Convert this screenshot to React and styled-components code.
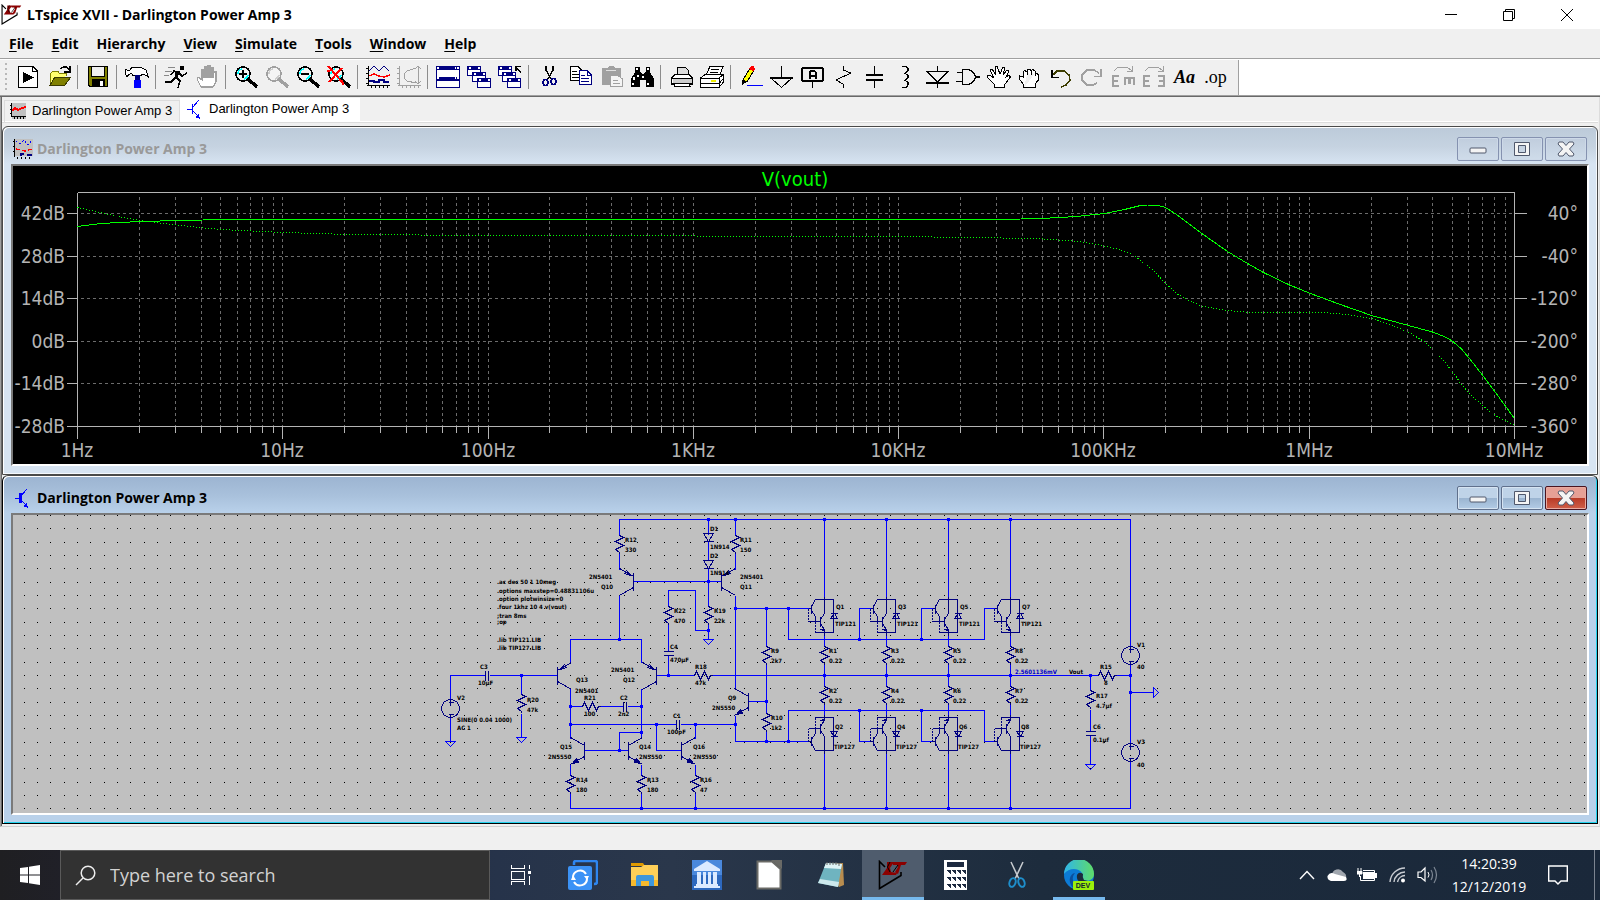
import React from "react";
import styled, { createGlobalStyle, css } from "styled-components";

const UI = `"Open Sans", "Noto Sans", sans-serif`;
const PLOT = `"DejaVu Sans Condensed", "DejaVu Sans", sans-serif`;

const GlobalStyle = createGlobalStyle`
  * { box-sizing: border-box; }
  body { margin: 0; background: #f0f0f0; font-family: ${UI}; color: #000; }
  button { font: inherit; color: inherit; background: none; border: 0; padding: 0; margin: 0; }
  svg { display: block; flex: none; }
`;

const Page = styled.div`
  display: flex;
  flex-direction: column;
  min-height: 100vh;
`;

/* ---------- application chrome ---------- */

const TitleBar = styled.header`
  display: flex;
  align-items: center;
  height: 29px;
  padding: 0 4px 0 1px;
  background: #fff;
`;

const AppTitle = styled.h1`
  flex: 1;
  margin: 0 0 0 5px;
  font-size: 14px;
  line-height: 20px;
  font-weight: 700;
`;

const CaptionButton = styled.button`
  display: flex;
  align-items: center;
  justify-content: center;
  width: 58px;
  height: 29px;
`;

const MenuBar = styled.nav`
  display: flex;
  height: 30px;
  border-bottom: 1px solid #a0a0a0;
`;

const MenuItem = styled.button`
  padding: 0 9px;
  font-size: 14px;
  line-height: 28px;
  font-weight: 700;
  u { text-underline-offset: 2px; }
`;

const ToolStrip = styled.div`
  display: flex;
  height: 38px;
  background: #fff;
  border-top: 1px solid #fff;
  border-bottom: 1px solid #696969;
  box-shadow: inset 0 -1px 0 #a0a0a0;
`;

const ToolBar = styled.div`
  display: flex;
  align-items: center;
  height: 35px;
  padding: 0 7px 2px 5px;
  background: #f0f0f0;
  border-right: 1px solid #a0a0a0;
`;

const Grip = styled.div`
  width: 2px;
  height: 28px;
  margin-right: 5px;
  background: repeating-linear-gradient(#b8b8b8 0 2px, transparent 2px 5px);
`;

const ToolButton = styled.button`
  display: flex;
  justify-content: center;
  align-items: center;
  width: 31px;
  height: 24px;
`;

const ToolSeparator = styled.div`
  width: 8px;
  height: 24px;
  background: linear-gradient(90deg, transparent 3px, #8c8c8c 3px 4px, transparent 4px);
`;

const Mdi = styled.main`
  border-left: 1px solid #a0a0a0;
  border-right: 1px solid #dcdcdc;
  border-bottom: 1px solid #d0d0d0;
  padding: 0 1px 2px;
  box-shadow: inset 1px 0 0 #696969;
`;

const TabStrip = styled.div`
  display: flex;
  align-items: flex-end;
  height: 29px;
  padding: 0 2px 4px;
  background: linear-gradient(#f0f0f0 24px, #fff 24px 25px, #dcdcdc 25px 26px, #f0f0f0 26px);
`;

const Tab = styled.button`
  display: flex;
  align-items: center;
  gap: 6px;
  height: 22px;
  width: 176px;
  padding: 0 0 2px 5px;
  border: 1px solid #dcdcdc;
  border-bottom: 0;
  font-family: "Liberation Sans", Arial, sans-serif;
  font-size: 13px;
  line-height: 18px;
  ${(p) => p.$active && css`
    height: 24px;
    width: 180px;
    gap: 8px;
    padding: 0 0 4px 6px;
    background: #fff;
    border-color: #fff;
  `}
`;

const Child = styled.section`
  display: flex;
  flex-direction: column;
  border: 1px solid ${(p) => (p.$active ? "#000" : "#4a4a4a")};
  border-top-color: #4a4a4a;
  border-radius: 6px 6px 0 0;
  background: ${(p) => (p.$active
    ? "linear-gradient(#9cb4d1, #a9c1dc 20px, #b9d1ea 37px, #b9d1ea)"
    : "linear-gradient(#bccad9, #c6d3e1 20px, #d7e4f2 37px, #d7e4f2)")};
  box-shadow: inset 1px 1px 0 #fff, inset -1px -1px 0 ${(p) => (p.$active ? "#22d3ee" : "#f4f8fc")};
  padding: 1px 8px 8px;
`;

const ChildTitle = styled.div`
  display: flex;
  align-items: center;
  gap: 4px;
  height: 36px;
  padding: 6px 2px 0;
  color: ${(p) => (p.$active ? "#000" : "#999")};
`;

const ChildName = styled.h2`
  flex: 1;
  margin: 0;
  font-size: 14px;
  line-height: 20px;
  font-weight: 700;
`;

const ChildButtons = styled.div`
  display: flex;
  gap: 2px;
`;

const ChildButton = styled.button`
  display: flex;
  align-items: center;
  justify-content: center;
  width: 42px;
  height: 24px;
  border: 1px solid #8592b0;
  border-radius: 2px;
  background: ${(p) => (p.$active ? "linear-gradient(#bfd3e8 0 50%, #9ab4d0 50%, #b3cce6)" : "linear-gradient(#c0cddd, #cfdcea)")};
  box-shadow: inset 0 0 0 1px ${(p) => (p.$active ? "#d6e4f2" : "#cdd9e8")};
  ${(p) => p.$active && css`border-color: #60708c;`}
  ${(p) => p.$danger && css`
    border-color: #4a1420;
    background: linear-gradient(#e6a096 0 50%, #b83a26 50%, #d0604a);
    box-shadow: inset 0 0 0 1px #e8aaa0;
  `}
`;

const Canvas = styled.div`
  border: 2px solid;
  border-color: #7a7a7a #fff #fff #7a7a7a;
  svg { width: 100%; height: auto; }
`;

const StatusBar = styled.footer`
  flex: 1;
  min-height: 22px;
  background: #f0f0f0;
`;

/* ---------- taskbar ---------- */

const TaskBar = styled.div`
  display: flex;
  height: 50px;
  background: linear-gradient(90deg, #1f1f22 0, #202028 4%, #26334a 31%, #2a374b 42%, #1d2c3d 65%, #1a283a 100%);
  color: #fff;
`;

const TaskButton = styled.button`
  display: flex;
  align-items: center;
  justify-content: center;
  width: ${(p) => p.$w || 62}px;
  height: 50px;
  ${(p) => p.$active && css`
    background: #4f5c6d;
    box-shadow: inset 0 -3px 0 #76b9ed;
  `}
  ${(p) => p.$running && css`
    background: linear-gradient(#76b9ed, #76b9ed) center bottom / 52px 3px no-repeat;
  `}
`;

const SearchBox = styled.label`
  display: flex;
  align-items: center;
  gap: 14px;
  width: 430px;
  padding-left: 14px;
  background: #323232;
  border: 1px solid #5a5a5a;
`;

const SearchInput = styled.input`
  flex: 1;
  min-width: 0;
  height: 40px;
  padding: 0;
  border: 0;
  outline: 0;
  background: none;
  color: #fff;
  font-family: ${UI};
  font-size: 18px;
  &::placeholder { color: #d2d2d2; opacity: 1; }
`;

const Tray = styled.div`
  display: flex;
  align-items: center;
  margin-left: auto;
  border-right: 1px solid #7c8490;
  margin-right: 5px;
`;

const TrayButton = styled.button`
  display: flex;
  align-items: center;
  justify-content: center;
  width: 30px;
  height: 50px;
`;

const Clock = styled.time`
  width: 90px;
  padding-left: 4px;
  font-size: 14px;
  line-height: 23px;
  text-align: center;
`;

const NoticeButton = styled(TrayButton)`
  width: 52px;
  margin-right: 10px;
`;

/* ---------- small drawings ---------- */

const LtLogo = ({ size }) => (
  <svg width={size} height={size} viewBox="0 0 30 30">
    <path d="M7 7L1.5 1.5V28.5L23 15.5V12" fill="none" stroke="#000" strokeWidth="1.6" />
    <path d="M4 15L9 8L9 2H16L12 8L13 12L19 13L18 15Z M15 2H29L27 5H23L20 14L17 12L20 7L19 5H15Z" fill="#8b0000" />
    <path d="M12 12L9.5 7L12 2M15 12L20 5" fill="none" stroke="#000" strokeWidth="1" />
  </svg>
);

const Transistor = ({ bold }) => (
  <svg width={bold ? 20 : 14} height="20" viewBox={bold ? "-2 0 20 20" : "0 0 14 20"} shapeRendering="crispEdges">
    <path d="M0 10.5H5M6 8L12 1M6 12L12 18" fill="none" stroke="#00f" strokeWidth="1" />
    <path d="M5.5 5V15" stroke="#00f" strokeWidth={bold ? 3 : 1} />
    <path d="M13 20L8 18L12 15Z" fill="#00f" />
  </svg>
);

const WaveIcon = ({ w = 16, dense }) => (
  <svg width={dense ? 20 : w} height={dense ? 20 : w} viewBox={dense ? "0 0 20 20" : "0 0 16 16"} shapeRendering="crispEdges">
    <rect x="2" width="18" height="17" fill="#c0c0c0" />
    {dense ? (
      <>
        <path d="M3 2L7 5L11 1L15 6L19 1" fill="none" stroke="#00f" strokeDasharray="2 2" />
        <path d="M3 10L8 11L12 12L19 10" fill="none" stroke="red" strokeWidth="1.5" strokeDasharray="4 2" />
        <path d="M8 17V15H11M14 16H19" fill="none" stroke="#000080" strokeWidth="1.5" />
        <path d="M1.5 0V18M0 2.5H2M0 7.5H2M0 12.5H2M4.500 18V20M8.500 18V20M12.500 18V20M16.500 18V20" stroke="#000" />
      </>
    ) : (
      <>
        <path d="M2 8L5 5L8 7L12 5L16 4" fill="none" stroke="red" strokeWidth="2" />
        <path d="M1.5 0V14M0 2.5H2M0 6.5H2M0 10.5H2M1 13.5H16M4.5 13V16M7.5 13V16M10.5 13V16M13.5 13V16" stroke="#000" />
      </>
    )}
  </svg>
);

const Lens = ({ stroke = "#000", shine = "#0ff", children }) => (
  <>
    <circle cx="10" cy="9" r="7" fill="#f4f4f4" stroke={stroke} strokeWidth="1.6" />
    <path d="M5 9A5 5 0 0 1 9 4M15 10A5 5 0 0 1 11 14" fill="none" stroke={shine} strokeWidth="1.4" />
    <path d="M15 14L24 22" stroke={stroke} strokeWidth="3.4" />
    {children}
  </>
);

const MiniWindow = ({ x, y }) => (
  <>
    <rect x={x + 0.5} y={y + 0.5} width="13" height="9" fill="#fff" stroke="#000080" />
    <rect x={x} y={y} width="14" height="4" fill="#000080" />
    <path d={`M${x + 2} ${y + 2}h2M${x + 11} ${y + 2}h2`} stroke="#fff" strokeWidth="2" />
  </>
);

const Axes = ({ c }) => (
  <path d="M3.5 1V20M1 3.5H4M1 8.5H4M1 13.5H4M1 18.5H4M2 20.5H25M6.5 20V23M10.5 20V23M14.5 20V23M18.5 20V23M22.5 20V23" stroke={c} />
);

const GRAY = "#a0a0a0";

const icons = {
  Run: <><path d="M3.5 1.5H18L22.5 6V22.5H3.5Z" fill="#fff" stroke="#000" /><path d="M17.5 2V6.5H22" fill="none" stroke="#000" /><path d="M8 7L19 12.5L8 18Z" /></>,
  Open: <><path d="M4 20V8H5L7 6H12L13 8H20V11" fill="#ffff70" stroke="#808000" /><path d="M4 20L9 12H25L19 20Z" fill="#808000" stroke="#3a3a00" /><path d="M14 4L17 2H21L24 6M24 1V7H18" fill="none" stroke="#000" strokeWidth="1.3" /></>,
  Save: <><path d="M3.5 1.5H22.5V21.5H5L3.5 20Z" fill="#808000" stroke="#000" /><rect x="6.500" y="1.5" width="13" height="10" fill="#f0f0f0" stroke="#000" /><rect x="7" y="14" width="13" height="8" /><rect x="15" y="16" width="3" height="5" fill="#fff" /></>,
  Hammer: <><path d="M1.5 4.500L5 6L8 2.500H17L22 5L24.500 12L19 9L17 10.500H9L7 8L3 11.500L1.5 9Z" fill="#fff" stroke="#000" /><rect x="11" y="10" width="5" height="5" fill="#000080" /><rect x="10" y="15" width="7" height="8" fill="#00f" /></>,
  Runner: <><circle cx="19" cy="3" r="2.2" /><path d="M16 6L13 12M14 6L13 13" stroke="#000" strokeWidth="3" /><path d="M13 12L17 16L15 23M13 12L8 17H2M16 7L11 6L8 10M16 8L19 11L24 8" fill="none" stroke="#000" strokeWidth="1.500" /><path d="M5 2H12M2 6H9M1 10H6" stroke="#888" /></>,
  Halt: <path d="M7 22L3 14L4 12L8 15V5H10V12H11V2H13V12H14V1H16V12H17V3H19V13L20 7H22V17L19 22Z" fill="#fff" stroke={GRAY} strokeWidth="1.3" />,
  "Zoom in": <Lens><path d="M6 9H14M10 5V13" stroke="#000" strokeWidth="2" /></Lens>,
  Pan: <Lens stroke={GRAY} shine="#ccc" />,
  "Zoom out": <Lens><path d="M6 9H14" stroke="#000" strokeWidth="2" /></Lens>,
  "Zoom fit": <Lens><path d="M2 1L17 18M16 3L3 17M1 6L7 5M17 20L16 15" stroke="red" strokeWidth="2" fill="none" /></Lens>,
  Waveform: <><path d="M4 6L9 1L14 6L19 1L24 6" fill="none" stroke="#000080" /><path d="M4 11L9 9L14 11L19 12L25 10" fill="none" stroke="red" strokeWidth="1.3" /><path d="M4 16H9V17H14V15H19V17H24" fill="none" stroke="#000080" strokeWidth="1.3" /><Axes c="#000" /></>,
  "Error log": <><Axes c={GRAY} /><path d="M20 3L11 6L8 9V13L11 16L20 18M22.500 1V19M19 4L22 1L25 4M19 16L22 19L25 16" fill="none" stroke={GRAY} /></>,
  Tile: <><rect x="1.5" y="1.5" width="23" height="21" fill="#fff" stroke="#000080" /><path d="M1 3H25M1 13.500H25" stroke="#000080" strokeWidth="4" /><path d="M2 3H4M20 3H21M22 3H24M2 13H4M20 13H21M22 13H24" stroke="#fff" strokeWidth="2" /></>,
  Cascade: <><MiniWindow x={1} y={1} /><MiniWindow x={6} y={7} /><MiniWindow x={11} y={13} /></>,
  "Close all": <><MiniWindow x={1} y={1} /><MiniWindow x={5} y={7} /><MiniWindow x={10} y={13} /><path d="M19 6V1.500H24M19 2L24 8" fill="none" stroke="#000" strokeWidth="1.3" /></>,
  Cut: <><path d="M10 1V5L15 14M17 1V5L12 14" fill="none" stroke="#000" strokeWidth="1.5" /><ellipse cx="9.500" cy="17.500" rx="2.500" ry="3" fill="none" stroke="#000080" strokeWidth="1.4" /><ellipse cx="17.500" cy="16.500" rx="2.500" ry="3" fill="none" stroke="#000080" strokeWidth="1.4" /></>,
  Copy: <><path d="M3.500 1.500H11L14.500 5V15.500H3.500Z" fill="#fff" stroke="#000" /><path d="M5 6H10M5 9H12M5 12H12" stroke="#000" /><path d="M12.500 5.500H20L24.500 10V19.500H12.500Z" fill="#fff" stroke="#000080" /><path d="M20 6V10H24M14 10H18M14 13H22M14 16H22" fill="none" stroke="#000080" /></>,
  Paste: <><path d="M4 3H10L11 1H16L17 3H23V20H4Z" fill={GRAY} /><path d="M8 5H18" stroke="#e0e0e0" /><path d="M12.500 10.500H20L24.500 14V21.500H12.500Z" fill="#f4f4f4" stroke={GRAY} /><path d="M15 15H20M15 18H22" stroke={GRAY} /></>,
  Find: <><path d="M6 2H11V6L13 9H15L17 6V2H21V7L25 14V22H17V15H11V22H2V14L6 7Z" /><path d="M7 4H9M18 4H20M5 12V15M4 18V20M14 11V13M19 18V20M9 10V12" stroke="#fff" strokeWidth="1.500" /></>,
  "Print preview": <><path d="M9 10V2H17L20 5V10" fill="#ddd" stroke="#000" /><path d="M3.500 19V13L7 9.500H21L24.500 13V19H21L22 21.500H7L6 19Z" fill="#fff" stroke="#000" /><path d="M4 13.500H24M4 18.500H24" stroke="#000" /><rect x="5" y="14" width="19" height="4" fill="#ccc" /></>,
  Print: <><path d="M7 10L11 1.500H24L21 10" fill="#fff" stroke="#000" /><path d="M12 4H20M11 7H19" stroke="#000" /><path d="M1.500 13L6 9.500H24.500V17L20 22.500H1.500Z" fill="#fff" stroke="#000" /><path d="M2 13.500H20V22M20 13L24 10M2 18.500H20L24 14" fill="none" stroke="#000" /><path d="M12 16H17" stroke="#ee0" strokeWidth="2" /></>,
  Wire: <><path d="M5 15L12 3L16 5L9 17Z" fill="#ff0" stroke="#000" /><path d="M4 20V15L9 17Z" /><path d="M11 4L13 1H16L17 4L15 6Z" fill="red" /><path d="M9 20.500H25" stroke="#00f" /></>,
  Ground: <><path d="M12.500 1V12" stroke="#000" /><path d="M1 12.500H24" stroke="#000" strokeWidth="2" /><path d="M2 13L12.500 22.500L23 13" fill="none" stroke="#000" /></>,
  "Label net": <><rect x="2" y="3" width="21" height="13" rx="2" fill="#f0f0f0" stroke="#000" strokeWidth="2" /><path d="M9.500 14V7L11 5.500H14L15.500 7V14M10 10.500H15" fill="none" stroke="#000" strokeWidth="2" /><path d="M12.500 17V23" stroke="#000" /></>,
  Resistor: <path d="M13 1L12 5L20 8L5 15L12 19V23" fill="none" stroke="#000" />,
  Capacitor: <><path d="M12.500 1V9M12.500 16V23" stroke="#000" /><path d="M4 10H21M4 15H21" stroke="#000" strokeWidth="2" /></>,
  Inductor: <path d="M9 1.500H13L15 3V6L12 8.500L15 10V13L12 15.500L15 17V20L13 22.500H9" fill="none" stroke="#000" strokeWidth="1.300" />,
  Diode: <><path d="M13.500 1V6M13.500 18V23M2 18H25" stroke="#000" strokeWidth="1.300" /><path d="M3 6.500H24L13.500 17Z" fill="none" stroke="#000" /></>,
  Component: <path d="M7.500 4.500H14L19 8L20.500 12L19 16L14 19.500H7.500ZM2 7.500H7M1 16.500H7M20 12H25" fill="none" stroke="#000" strokeWidth="1.300" />,
  Move: <path d="M9 22.500L8 19L2 13L1.500 11L4 10L8 13L4 5L6 4L10 10L9 2L11 1.500L14 9L17 2L19 2L17 10L21 5L23 6L20 12L23 10L24.500 12L19 19L18 22.500Z" fill="#fff" stroke="#000" />,
  Drag: <path d="M7 22.500L6 19L2.500 14V11L6 12L6 7L8 5.500L10 7V10M10 7L11 4.500H13L14 6V10M14 6L16 4.500L18 6V11M18 8H20L21.500 10V15L18 19V22.500H7" fill="#fff" stroke="#000" />,
  Undo: <><path d="M5 10L9 6H16L21 10L22 15L18 20L13 22" fill="none" stroke="#3c3c00" strokeWidth="1.500" /><path d="M4 5V12.500H11" fill="none" stroke="#000" strokeWidth="1.600" /></>,
  Redo: <><path d="M20 8L15 5H8L3 10V15L8 20H14L18 18" fill="none" stroke={GRAY} strokeWidth="1.500" /><path d="M22 4V11.500H15" fill="none" stroke={GRAY} strokeWidth="1.600" /></>,
  Rotate: <><path d="M9 11H3V21H9M3 16H8M15 20V12M14 13H25M19.500 13V19M24 13V20" fill="none" stroke={GRAY} strokeWidth="2.600" /><path d="M4 6L8 2H17L22 6M22 1V6.500H17" fill="none" stroke={GRAY} /></>,
  Mirror: <><path d="M9 11H3V21H9M3 16H8M17 11H23V21H17M23 16H18" fill="none" stroke={GRAY} strokeWidth="2.600" /><path d="M4 6L8 2H17L22 6M22 1V6.500H17" fill="none" stroke={GRAY} /></>,
};

const TextTool = styled.span`
  font-family: "Liberation Serif", serif;
  font-weight: ${(p) => (p.$italic ? 700 : 400)};
  font-size: 18px;
  line-height: 24px;
  font-style: ${(p) => (p.$italic ? "italic" : "normal")};
`;

const toolGroups = [
  ["Run", "Open"], ["Save"], ["Hammer"], ["Runner", "Halt"],
  ["Zoom in", "Pan", "Zoom out", "Zoom fit"], ["Waveform", "Error log"],
  ["Tile", "Cascade", "Close all"], ["Cut", "Copy", "Paste", "Find"],
  ["Print preview", "Print"],
  ["Wire", "Ground", "Label net", "Resistor", "Capacitor", "Inductor", "Diode", "Component", "Move", "Drag", "Undo", "Redo", "Rotate", "Mirror", "Aa", ".op"],
];

const Tool = ({ name }) => (
  <ToolButton aria-label={name}>
    {icons[name]
      ? <svg width="25" height="24" viewBox="0 0 25 24" shapeRendering="crispEdges">{icons[name]}</svg>
      : <TextTool $italic={name === "Aa"}>{name}</TextTool>}
  </ToolButton>
);

/* ---------- Bode plot ---------- */

const PLOT_LEFT = 77, PLOT_RIGHT = 1514, PLOT_TOP = 192, PLOT_BOTTOM = 426;
const DECADE = (PLOT_RIGHT - PLOT_LEFT) / 7;
const rows = [
  [213, "42dB", "40°"], [256, "28dB", "-40°"], [298, "14dB", "-120°"],
  [341, "0dB", "-200°"], [383, "-14dB", "-280°"], [426, "-28dB", "-360°"],
];
const freqs = ["1Hz", "10Hz", "100Hz", "1KHz", "10KHz", "100KHz", "1MHz", "10MHz"];

const gain = [[77, 226], [100, 223], [140, 221], [180, 220], [225, 219], [1000, 219], [1041, 218], [1076, 216], [1104, 213], [1124, 209], [1138, 205.500], [1147, 204.500], [1156, 204.500], [1165, 207], [1176, 214], [1188, 223], [1202, 233.500], [1227, 251], [1247, 263], [1263, 272], [1289, 284.500], [1310, 293], [1337, 303], [1371, 315], [1408, 325], [1432, 331.500], [1446, 337], [1453, 341.500], [1461, 348.500], [1469, 358], [1483, 376], [1495, 392], [1514, 418]];
const phase = [[77, 207], [99, 212], [120, 216.500], [140, 220], [179, 225], [219, 229], [282, 232], [347, 234], [490, 235], [898, 236], [1000, 237.500], [1042, 238.500], [1073, 240.500], [1092, 243], [1115, 248], [1132, 254], [1153, 270], [1165, 283], [1176, 293], [1188, 300], [1202, 306], [1227, 310], [1245, 311.500], [1318, 311.500], [1346, 314], [1371, 318], [1387, 323.500], [1408, 331.500], [1425, 342], [1432, 349], [1444, 361.500], [1453, 372.500], [1461, 384], [1469, 393.500], [1483, 406], [1495, 415], [1514, 425]];

const toPath = (pts) => "M" + pts.map((p) => p.join(" ")).join("L");

const minorLines = [];
for (let d = 0; d < 7; d++) {
  for (let k = 2; k <= 10; k++) {
    if (d === 6 && k === 10) continue;
    minorLines.push([Math.round(PLOT_LEFT + DECADE * (d + Math.log10(k))), k === 10]);
  }
}

const AxisText = styled.text`
  font-family: ${PLOT};
  font-size: ${(p) => (p.$trace ? 20 : 19)}px;
  fill: ${(p) => (p.$trace ? "#0f0" : "#b4b4b4")};
  text-anchor: ${(p) => p.$anchor || "middle"};
`;

const BodePlot = () => (
  <svg viewBox="13 166 1574 298" role="img" aria-label="Gain and phase of V(vout)">
    <rect x="13" y="166" width="1574" height="298" fill="#000" />
    <g shapeRendering="crispEdges" fill="none" transform="translate(.5 .5)">
      <g stroke="#6c6c6c" strokeDasharray="3 3">
        {minorLines.map(([x]) => <path key={x} d={`M${x} ${PLOT_TOP + 4}V${PLOT_BOTTOM}`} />)}
        {rows.slice(0, 5).map(([y]) => <path key={y} d={`M${PLOT_LEFT + 3} ${y}H${PLOT_RIGHT}`} />)}
      </g>
      <g stroke="#b4b4b4">
        <path d={`M${PLOT_LEFT} ${PLOT_TOP}H${PLOT_RIGHT}V${PLOT_BOTTOM + 12}M${PLOT_LEFT} ${PLOT_TOP}V${PLOT_BOTTOM + 12}M${PLOT_LEFT} ${PLOT_BOTTOM}H${PLOT_RIGHT}`} />
        {rows.map(([y]) => <path key={y} d={`M66 ${y}H${PLOT_LEFT}M${PLOT_RIGHT} ${y}H1526`} />)}
        {minorLines.map(([x, major]) => <path key={x} d={`M${x} ${PLOT_BOTTOM}v${major ? 12 : 6}`} />)}
      </g>
      <path d={toPath(gain)} stroke="#0f0" />
      <path d={toPath(phase)} stroke="#0f0" strokeDasharray="1 2" />
    </g>
    <AxisText x="795" y="186" $trace>V(vout)</AxisText>
    {rows.map(([y, l, r]) => (
      <React.Fragment key={y}>
        <AxisText x="65" y={y + 7} $anchor="end">{l}</AxisText>
        <AxisText x="1578" y={y + 7} $anchor="end">{r}</AxisText>
      </React.Fragment>
    ))}
    {freqs.map((f, i) => <AxisText key={f} x={Math.round(PLOT_LEFT + DECADE * i)} y="457">{f}</AxisText>)}
  </svg>
);

/* ---------- schematic ---------- */

const gridDots = [];
for (let j = 0; j <= 22; j++) {
  for (let i = 0; i <= 117; i++) {
    gridDots.push(`M${Math.floor(24 + (i * 40) / 3)} ${Math.floor(515.4 + (j * 40) / 3)}h1`);
  }
}

const wires = `
M619 535V519H1130V646M619 552V569M708 519V534M708 541V560M708 568V606M735 519V535M735 552V569
M633 581H721M619 595V639M570 662V639H641V662M735 595V689M735 608H808M766 608V646M766 664V713M766 730V741
M708 624V639M708 630H695V590H668V606M668 624V651M668 655V675M656 675H693M712 675H1097M1116 675H1130
M450 699V675H485M489 675H557M450 717V741M521 675V694M521 713V737M570 688V738M570 706H582M600 706H623M627 706H641
M641 688V738M570 724H676M680 724H735M656 724V750H681M695 724V738M584 750H628M619 750V732H641
M570 764V775M570 793V808M641 764V775M641 793V808M695 764V775M695 793V808M570 808H1130V761
M735 715V741H808M748 701H766M788 608V639H984V608H994M859 639V608H870M921 639V608H932
M788 741V710H984V741H994M859 710V741H870M921 710V741H932M1130 664V743M1130 692H1153
M1090 675V690M1090 709V731M1090 735V764`;

const nodes = [[708, 519], [735, 519], [824, 519], [886, 519], [948, 519], [1010, 519], [708, 581], [619, 639], [708, 630], [668, 675], [521, 675], [735, 608], [766, 608], [788, 608], [859, 639], [921, 639], [859, 710], [921, 710], [766, 701], [766, 741], [788, 741], [735, 724], [695, 724], [656, 724], [570, 724], [570, 706], [641, 706], [641, 732], [619, 750], [641, 808], [695, 808], [824, 808], [886, 808], [948, 808], [1010, 808], [824, 675], [886, 675], [948, 675], [1010, 675], [1090, 675], [1130, 675], [1130, 692]];

const vResistor = (x, y) => `M${x} ${y}l4 2l-8 4l8 4l-8 4l4 3v1`;
const hResistor = (x, y) => `M${x} ${y}h1l2 -4l4 8l4 -8l4 8l2 -4h2`;
const ground = (x, y) => `M${x - 5} ${y}h10l-5 5z`;
const vResistors = [[619, 535], [735, 535], [668, 606], [708, 606], [521, 694], [766, 646], [766, 713], [570, 775], [641, 775], [695, 775], [1090, 690], ...[824, 886, 948, 1010].flatMap((x) => [[x, 646], [x, 686]])];
const columns = [824, 886, 948, 1010];

/* dir: side on which collector and emitter leave the base bar; up: arrow drawn at the top leg */
const bjt = (bar, mid, dir, up) => {
  const x = bar + dir * 14;
  const arrow = up
    ? `M${bar + dir * 3} ${mid - 6}L${bar + dir * 9} ${mid - 8}L${bar + dir * 7} ${mid - 11}Z`
    : `M${x - dir * 2} ${mid + 13}L${x - dir * 8} ${mid + 12}L${x - dir * 6} ${mid + 8}Z`;
  return `M${bar} ${mid - 9}v18M${bar} ${mid - 5}L${x} ${mid - 13}M${bar} ${mid + 6}L${x} ${mid + 14}${arrow}`;
};
const bjts = [bjt(633, 581, -1, true), bjt(721, 581, 1, true), bjt(557, 675, 1, true), bjt(656, 675, -1, true), bjt(584, 750, -1, false), bjt(628, 750, 1, false), bjt(681, 750, 1, false), bjt(748, 701, -1, false)];

const Darlington = ({ x, flip }) => (
  <g transform={flip ? "translate(0 1349) scale(1 -1)" : undefined}>
    <path d={`M${x - 16} 608h3M${x - 13} 604v9M${x - 13} 606l4 -7h18v33h-18v-2M${x - 13} 610l4 6v5M${x - 16} 621h12M${x - 4} 616v10M${x - 4} 619l4 -6v-17M${x - 4} 623l4 6v6M${x - 2} 626l2 4l-4 -1M${x + 6} 613h7M${x + 6} 618h7l-3 -5z`} />
    <path d={`M${x - 16} 608v13M${x - 9} 621v9`} strokeDasharray="2 1" />
  </g>
);

const Source = ({ x, y }) => (
  <path d={`M${x - 9} ${y}a9 9 0 1 0 18 0a9 9 0 1 0 -18 0M${x} ${y - 9}v6M${x - 2} ${y - 6}h5M${x - 2} ${y + 6}h5M${x} ${y + 6}v3`} />
);

const labels = [
  [625, 542, "R12"], [625, 552, "330"], [589, 579, "2N5401"], [601, 589, "Q10"],
  [710, 531, "D1"], [710, 549, "1N914"], [710, 558, "D2"], [710, 575, "1N914"],
  [740, 542, "R11"], [740, 552, "150"], [740, 579, "2N5401"], [740, 589, "Q11"],
  [497, 584, ".ac dec 50 1 10meg"], [497, 593, ".options maxstep=0.48831106u"],
  [497, 601, ".option plotwinsize=0"], [497, 609, ".four 1khz 10 4 v(vout)"],
  [497, 618, ";tran 8ms"], [497, 624, ";op"], [497, 642, ".lib TIP121.LIB"], [497, 650, ".lib TIP127.LIB"],
  [674, 613, "R22"], [674, 623, "470"], [714, 613, "R19"], [714, 623, "22k"],
  [670, 649, "C4"], [670, 662, "470µF"], [695, 669, "R18"], [695, 685, "47k"],
  [480, 669, "C3"], [478, 685, "10µF"], [457, 700, "V2"], [457, 722, "SINE(0 0.04 1000)"], [457, 730, "AC 1"],
  [527, 702, "R20"], [527, 712, "47k"], [576, 682, "Q13"], [575, 693, "2N5401"],
  [584, 700, "R21"], [584, 716, "100"], [620, 700, "C2"], [618, 716, "2n2"],
  [611, 672, "2N5401"], [623, 682, "Q12"], [673, 718, "C1"], [667, 734, "100pF"],
  [728, 700, "Q9"], [712, 710, "2N5550"], [560, 749, "Q15"], [548, 759, "2N5550"],
  [639, 749, "Q14"], [639, 759, "2N5550"], [693, 749, "Q16"], [693, 759, "2N5550"],
  [576, 782, "R14"], [576, 792, "180"], [647, 782, "R13"], [647, 792, "180"], [700, 782, "R16"], [700, 792, "47"],
  [771, 653, "R9"], [771, 663, "2k7"], [771, 720, "R10"], [771, 730, "1k2"],
  ...columns.flatMap((x, i) => [
    [x + 12, 609, ["Q1", "Q3", "Q5", "Q7"][i]], [x + 11, 626, "TIP121"],
    [x + 5, 653, ["R1", "R3", "R5", "R8"][i]], [x + 5, 663, "0.22"],
    [x + 5, 693, ["R2", "R4", "R6", "R7"][i]], [x + 5, 703, "0.22"],
    [x + 11, 729, ["Q2", "Q4", "Q6", "Q8"][i]], [x + 10, 749, "TIP127"],
  ]),
  [1069, 674, "Vout"], [1100, 669, "R15"], [1104, 685, "8"], [1096, 698, "R17"], [1096, 708, "4.7µf"],
  [1093, 729, "C6"], [1093, 742, "0.1µf"], [1137, 647, "V1"], [1137, 669, "40"], [1137, 744, "V3"], [1137, 767, "40"],
];

const PartLabel = styled.text`
  font-family: ${PLOT};
  font-weight: 700;
  font-size: 6px;
  text-rendering: geometricPrecision;
  fill: ${(p) => (p.$probe ? "#0000c8" : "#000")};
`;

const Schematic = () => (
  <svg viewBox="13 515 1574 298" role="img" aria-label="Amplifier schematic">
    <rect x="13" y="515" width="1574" height="298" fill="#c0c0c0" />
    <g shapeRendering="crispEdges" fill="none" transform="translate(.5 .5)">
      <path d={gridDots.join("")} stroke="#000" transform="translate(-.5 0)" />
      <g stroke="#00f">
        <path d={wires} />
        {columns.map((x) => <path key={x} d={`M${x} 519V599M${x} 632V646M${x} 664V686M${x} 704V717M${x} 750V808`} />)}
        <path d={ground(708, 639) + ground(450, 741) + ground(521, 737) + ground(1090, 764) + "M1153 687v10l5 -5z"} />
      </g>
      <g stroke="#000080">
        <path d={vResistors.map(([x, y]) => vResistor(x, y)).join("")} />
        <path d={hResistor(693, 675) + hResistor(1097, 675) + hResistor(581, 706)} />
        <path d={bjts.join("")} />
        <path d="M703 533h10l-5 8zM703 541h10M703 560h10l-5 8zM703 568h10" />
        <path d="M663 651h10M663 655h10M1085 731h10M1085 735h10M485 670v10M488 670v10M623 701v10M626 701v10M676 719v10M679 719v10" />
        {columns.map((x) => <Darlington key={x} x={x} />)}
        {columns.map((x) => <Darlington key={x} x={x} flip />)}
        <Source x={450} y={708} />
        <Source x={1130} y={655} />
        <Source x={1130} y={752} />
      </g>
      <path d={nodes.map(([x, y]) => `M${x - 1} ${y}h3`).join("")} stroke="#00f" strokeWidth="3" transform="translate(-.5 0)" />
    </g>
    {labels.map(([x, y, t]) => <PartLabel key={`${x}-${y}`} x={x} y={y}>{t}</PartLabel>)}
    <PartLabel x="1015" y="674" $probe>2.5601136mV</PartLabel>
  </svg>
);

const ChildWindow = ({ active, icon, children }) => (
  <Child $active={active}>
    <ChildTitle $active={active}>
      {icon}
      <ChildName>Darlington Power Amp 3</ChildName>
      <ChildButtons>
        <ChildButton $active={active} aria-label="Minimize">
          <svg width="18" height="16"><rect x="1" y="7" width="16" height="5" rx="1" fill="#f4f4f4" stroke="#50586c" /></svg>
        </ChildButton>
        <ChildButton $active={active} aria-label="Maximize">
          <svg width="18" height="16">
            <path d="M1.500 1.500H16.500V14.500H1.500ZM5.500 4.500V11.500H12.500V4.500Z" fill="#f4f4f4" fillRule="evenodd" stroke="#50586c" />
          </svg>
        </ChildButton>
        <ChildButton $active={active} $danger={active} aria-label="Close window">
          <svg width="18" height="16">
            <path d="M2 1H6L9 4.500L12 1H16L17 3L12.500 8L17 13L16 15H12L9 11.500L6 15H2L1 13L5.500 8L1 3Z" fill="#f4f4f4" stroke="#50586c" />
          </svg>
        </ChildButton>
      </ChildButtons>
    </ChildTitle>
    <Canvas>{children}</Canvas>
  </Child>
);

const menus = [["", "F", "ile"], ["", "E", "dit"], ["H", "i", "erarchy"], ["", "V", "iew"], ["", "S", "imulate"], ["", "T", "ools"], ["", "W", "indow"], ["", "H", "elp"]];

const taskIcons = {
  Sync: <svg width="30" height="30" viewBox="0 0 30 30"><path d="M6 5V2.500Q6 1 8 1H27Q29 1 29 3V22Q29 24 26 24" fill="none" stroke="#2e86f0" strokeWidth="2.500" /><rect x="0" y="6" width="24" height="24" rx="2" fill="#3b92f6" /><path d="M5 18A7 7 0 0 1 18 14M19 18A7 7 0 0 1 6 22" fill="none" stroke="#fff" strokeWidth="2" /><path d="M16 16H21L19 20ZM3 20L5 15L8 20Z" fill="#fff" /></svg>,
  Explorer: <svg width="30" height="30" viewBox="0 0 30 30"><path d="M1 3H13L15 6H1Z" fill="#e09a00" /><path d="M1 7H11L14 5H28V26H1Z" fill="#ffd058" /><path d="M1 20H28V26H1Z" fill="#f7b92c" /><path d="M6 26V17Q6 15 8 15H22Q24 15 24 17V26H19V21H11V26Z" fill="#3f97dc" /></svg>,
  Bank: <svg width="30" height="30" viewBox="0 0 30 30"><rect width="30" height="15" fill="#4a88dc" /><rect y="15" width="30" height="15" fill="#2d68be" /><path d="M15 1L28 9V11H2V9ZM5 12H9V24H5ZM11 12H14V24H11ZM16 12H19V24H16ZM21 12H25V24H21ZM4 24H26V26H28V28H2V26H4Z" fill="#dceaff" /></svg>,
  Document: <svg width="26" height="30" viewBox="0 0 26 30"><path d="M1.500 1.500H16L24.500 9V28.500H1.500Z" fill="#fff" stroke="#6a6a66" strokeWidth="2" /><path d="M15 0H26V9Z" fill="#6a6a66" /></svg>,
  Notepad: <svg width="30" height="30" viewBox="0 0 30 30"><path d="M9 4L27 3L28 25L23 27Z" fill="#b98d4f" /><path d="M10 3L26 4L22 27L2 23Z" fill="#6fb4c0" /><path d="M10 3L26 4L25 9L8 8Z" fill="#dff4f6" /><path d="M4 19L23 22L22 27L2 23Z" fill="#cde8ec" /><path d="M11 2V5M14 2V5M17 2V5M20 2V5M23 3V6" stroke="#666" /></svg>,
  LTspice: <LtLogo size={30} />,
  Calculator: <svg width="23" height="30" viewBox="0 0 23 30" shapeRendering="crispEdges"><rect width="23" height="30" fill="#fff" /><rect x="3" y="2" width="17" height="5" fill="#1d2a40" /><path d="M3 10h3v3zM8 10h3v3zM13 10h3v3zM18 10h3v3zM3 17h3v3zM8 17h3v3zM13 17h3v3zM18 17h3v3zM3 24h3v3zM8 24h3v3zM13 24h3v3zM18 24h3v3z" fill="#1d2a40" stroke="#1d2a40" /></svg>,
  Snip: <svg width="20" height="30" viewBox="0 0 20 30"><path d="M4 2L12 19M16 2L8 19" stroke="#c8ccd0" strokeWidth="1.500" /><ellipse cx="5.500" cy="22.500" rx="3" ry="4.500" transform="rotate(20 5.500 22.500)" fill="none" stroke="#1e8ecb" strokeWidth="2" /><ellipse cx="14.500" cy="22.500" rx="3" ry="4.500" transform="rotate(-20 14.500 22.500)" fill="none" stroke="#1e8ecb" strokeWidth="2" /></svg>,
  Edge: (
    <svg width="30" height="30" viewBox="0 0 30 30">
      <defs><linearGradient id="edgeTop"><stop offset="0" stopColor="#2fb5ea" /><stop offset="1" stopColor="#5fdc68" /></linearGradient></defs>
      <circle cx="15" cy="15" r="15" fill="#0c7bd6" />
      <path d="M0 14A15 15 0 0 1 30 14C30 20 24 22 19 20C17 19 20 17 18 13C15 8 5 7 0 14Z" fill="url(#edgeTop)" />
      <path d="M11 13C5 20 12 29 21 28A15 15 0 0 1 11 29C3 24 5 14 11 13Z" fill="#0b4f9e" />
      <path d="M13 15Q12 20 16 22H28L20 20Q18 17 19 14Q15 11 13 15Z" fill="#1c2b3c" />
      <rect x="9" y="21" width="21" height="9" rx="1" fill="#9bf00b" />
      <text x="19" y="28" fontFamily="Liberation Sans, sans-serif" fontWeight="700" fontSize="7" textAnchor="middle" fill="#123">DEV</text>
    </svg>
  ),
};

export default function App() {
  return (
    <Page>
      <GlobalStyle />
      <TitleBar>
        <LtLogo size={21} />
        <AppTitle>LTspice XVII - Darlington Power Amp 3</AppTitle>
        <CaptionButton aria-label="Minimize"><svg width="12" height="12"><path d="M0 5.500H12" stroke="#000" /></svg></CaptionButton>
        <CaptionButton aria-label="Restore"><svg width="12" height="12"><path d="M.500 2.500H9.500V11.500H.500ZM2.500 2V.500H11.500V9.500H10" fill="none" stroke="#000" /></svg></CaptionButton>
        <CaptionButton aria-label="Close"><svg width="12" height="12"><path d="M0 0L12 12M12 0L0 12" stroke="#000" /></svg></CaptionButton>
      </TitleBar>
      <MenuBar>
        {menus.map(([a, b, c]) => <MenuItem key={b + c}>{a}<u>{b}</u>{c}</MenuItem>)}
      </MenuBar>
      <ToolStrip>
        <ToolBar role="toolbar">
          <Grip />
          {toolGroups.map((group, i) => (
            <React.Fragment key={group[0]}>
              {i > 0 && <ToolSeparator />}
              {group.map((name) => <Tool key={name} name={name} />)}
            </React.Fragment>
          ))}
        </ToolBar>
      </ToolStrip>
      <Mdi>
        <TabStrip role="tablist">
          <Tab role="tab"><WaveIcon />Darlington Power Amp 3</Tab>
          <Tab role="tab" $active aria-selected="true"><Transistor />Darlington Power Amp 3</Tab>
        </TabStrip>
        <ChildWindow icon={<WaveIcon dense />}><BodePlot /></ChildWindow>
        <ChildWindow active icon={<Transistor bold />}><Schematic /></ChildWindow>
      </Mdi>
      <StatusBar />
      <TaskBar>
        <TaskButton $w={60} aria-label="Start">
          <svg width="20" height="20" viewBox="0 0 20 20"><path d="M0 3L8 2V9.500H0ZM9 1.800L20 0V9.500H9ZM0 10.500H8V18L0 17ZM9 10.500H20V20L9 18.200Z" fill="#fff" /></svg>
        </TaskButton>
        <SearchBox>
          <svg width="21" height="21" viewBox="0 0 21 21"><circle cx="13" cy="8" r="6.800" fill="none" stroke="#eee" strokeWidth="1.500" /><path d="M8 13L1 20" stroke="#eee" strokeWidth="1.500" /></svg>
          <SearchInput aria-label="Search" placeholder="Type here to search" />
        </SearchBox>
        <TaskButton $w={62} aria-label="Task view">
          <svg width="21" height="20" viewBox="0 0 21 20" shapeRendering="crispEdges"><path d="M.500 0V3.500H13.500V0M.500 6.500H13.500V14.500H.500ZM.500 20V16.500H13.500V20M18.500 0V4M18.500 11V20" fill="none" stroke="#fff" /><rect x="17" y="6" width="3" height="3" fill="#fff" /></svg>
        </TaskButton>
        {Object.entries(taskIcons).map(([name, icon]) => (
          <TaskButton key={name} aria-label={name} $active={name === "LTspice"} $running={name === "Edge"}>{icon}</TaskButton>
        ))}
        <Tray>
          <TrayButton aria-label="Show hidden icons"><svg width="16" height="10"><path d="M1 9L8 1.500L15 9" fill="none" stroke="#fff" strokeWidth="1.400" /></svg></TrayButton>
          <TrayButton aria-label="OneDrive"><svg width="20" height="14"><path d="M5 7A6 6 0 0 1 16 4Q20 6 19 10L8 8Z" fill="#a0a6ae" /><path d="M4 13Q0 12 .500 8Q3 3 8 6L19 9Q21 13 17 13Z" fill="#fff" /></svg></TrayButton>
          <TrayButton aria-label="Battery"><svg width="20" height="14"><path d="M6 2.500H17.500V12.500H3.500V8" fill="none" stroke="#fff" /><rect x="6" y="4" width="11" height="7" fill="#fff" /><rect x="18" y="5" width="2" height="5" fill="#fff" /><path d="M1 0V3M4 0V3M0 3.500H5V6H0ZM2.500 6V9" fill="#fff" stroke="#fff" /></svg></TrayButton>
          <TrayButton aria-label="Wi-Fi"><svg width="17" height="16"><path d="M1 15A15 15 0 0 1 16 1M5 15A11 11 0 0 1 16 5M8.500 15A8 8 0 0 1 16 8.500" fill="none" stroke="#c8ccd2" strokeWidth="1.400" /><circle cx="14" cy="13.500" r="2" fill="#fff" /></svg></TrayButton>
          <TrayButton aria-label="Volume"><svg width="21" height="18"><path d="M1 6H4L8 2V15L4 11.500H1Z" fill="none" stroke="#fff" strokeWidth="1.200" /><path d="M11 6Q13 9 11 11.500" fill="none" stroke="#fff" /><path d="M14 4Q17 9 14 14M17 1Q22 9 17 17" fill="none" stroke="#7d8794" strokeWidth="1.200" /></svg></TrayButton>
          <Clock>14:20:39<br />12/12/2019</Clock>
          <NoticeButton aria-label="Notifications"><svg width="20" height="20"><path d="M.700 1H19.300V16H13L10 19L7 16H.700Z" fill="none" stroke="#fff" strokeWidth="1.400" /></svg></NoticeButton>
        </Tray>
      </TaskBar>
    </Page>
  );
}
